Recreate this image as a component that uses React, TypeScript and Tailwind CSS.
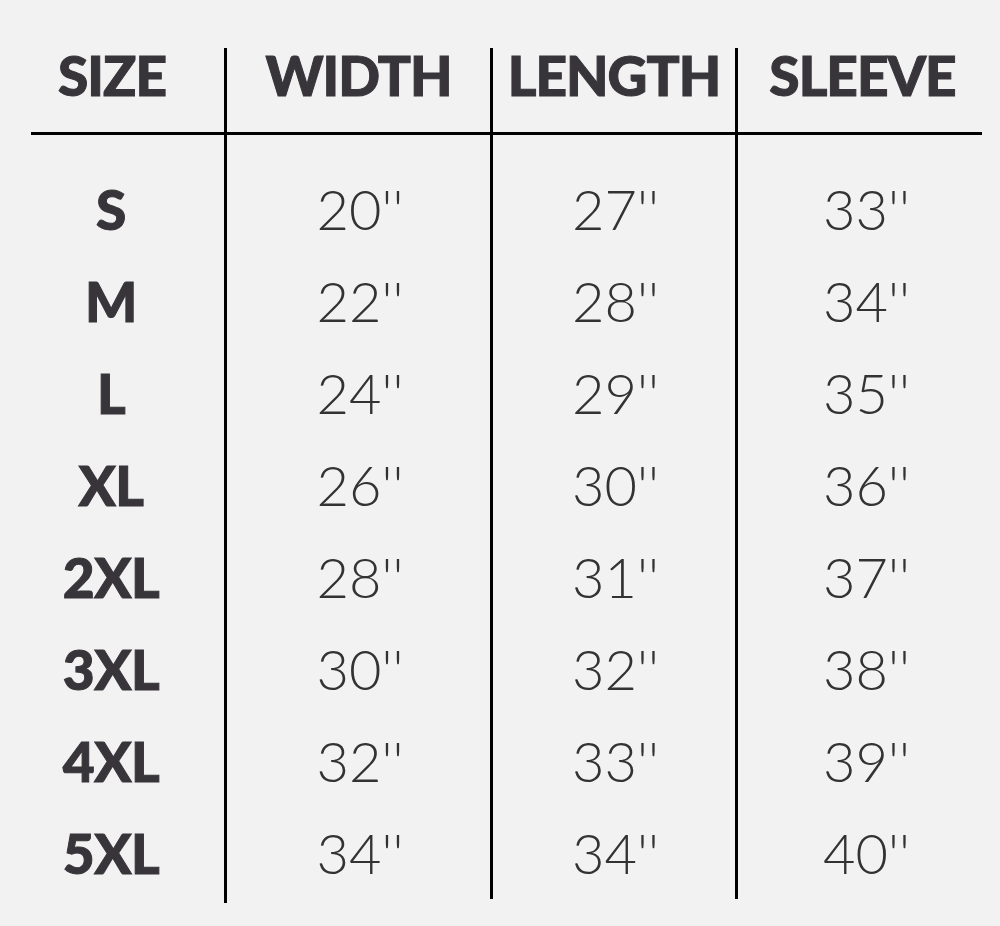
import React from 'react';

const sizes = ['S', 'M', 'L', 'XL', '2XL', '3XL', '4XL', '5XL'];
const widths = ['20', '22', '24', '26', '28', '30', '32', '34'];
const lengths = ['27', '28', '29', '30', '31', '32', '33', '34'];
const sleeves = ['33', '34', '35', '36', '37', '38', '39', '40'];

const headFont = { fontFamily: 'Lato, "Liberation Sans", sans-serif' };

type ColProps = {
  title: string;
  values: string[];
  bold?: boolean;
  colClass: string;
  lineClass: string;
  valueClass?: string;
};

const Column: React.FC<ColProps> = ({ title, values, bold, colClass, lineClass, valueClass = '' }) => (
  <div className={`flex flex-col ${colClass}`} style={headFont}>
    {/* header */}
    <div className="h-[84px] flex justify-center">
      <span className="text-[55px] leading-none font-black text-[#38353a] tracking-[-1px] [-webkit-text-stroke:1px_#38353a]">
        {title}
      </span>
    </div>
    <div className={`h-[3px] bg-black ${lineClass}`} />
    {/* rows */}
    <div className={`pt-[28px] flex flex-col ${valueClass}`}>
      {values.map((v) => (
        <div key={v + title} className="h-[92px] flex items-center justify-center">
          <span
            className={
              bold
                ? 'text-[55px] leading-none font-black text-[#38353a] tracking-[-0.5px] [-webkit-text-stroke:1px_#38353a]'
                : 'text-[56px] leading-none font-light text-[#333333]'
            }
          >
            {bold ? v : `${v}''`}
          </span>
        </div>
      ))}
    </div>
  </div>
);

export default function App() {
  return (
    <div className="w-[1000px] h-[926px] bg-[#f2f2f2] overflow-hidden">
      <div className="flex items-start pt-[48px]">
        <Column
          title="SIZE"
          values={sizes}
          bold
          colClass="w-[227px] border-r-[3px] border-black pb-[4px]"
          lineClass="ml-[31px]"
          valueClass="pr-[2px]"
        />
        <Column
          title="WIDTH"
          values={widths}
          colClass="w-[266px] border-r-[3px] border-black"
          lineClass=""
          valueClass="pl-[3px]"
        />
        <Column
          title="LENGTH"
          values={lengths}
          colClass="w-[245px] border-r-[3px] border-black"
          lineClass=""
          valueClass="pl-[3px]"
        />
        <Column
          title="SLEEVE"
          values={sleeves}
          colClass="w-[249px]"
          lineClass="mr-[5px]"
          valueClass="pl-[8px]"
        />
      </div>
    </div>
  );
}
